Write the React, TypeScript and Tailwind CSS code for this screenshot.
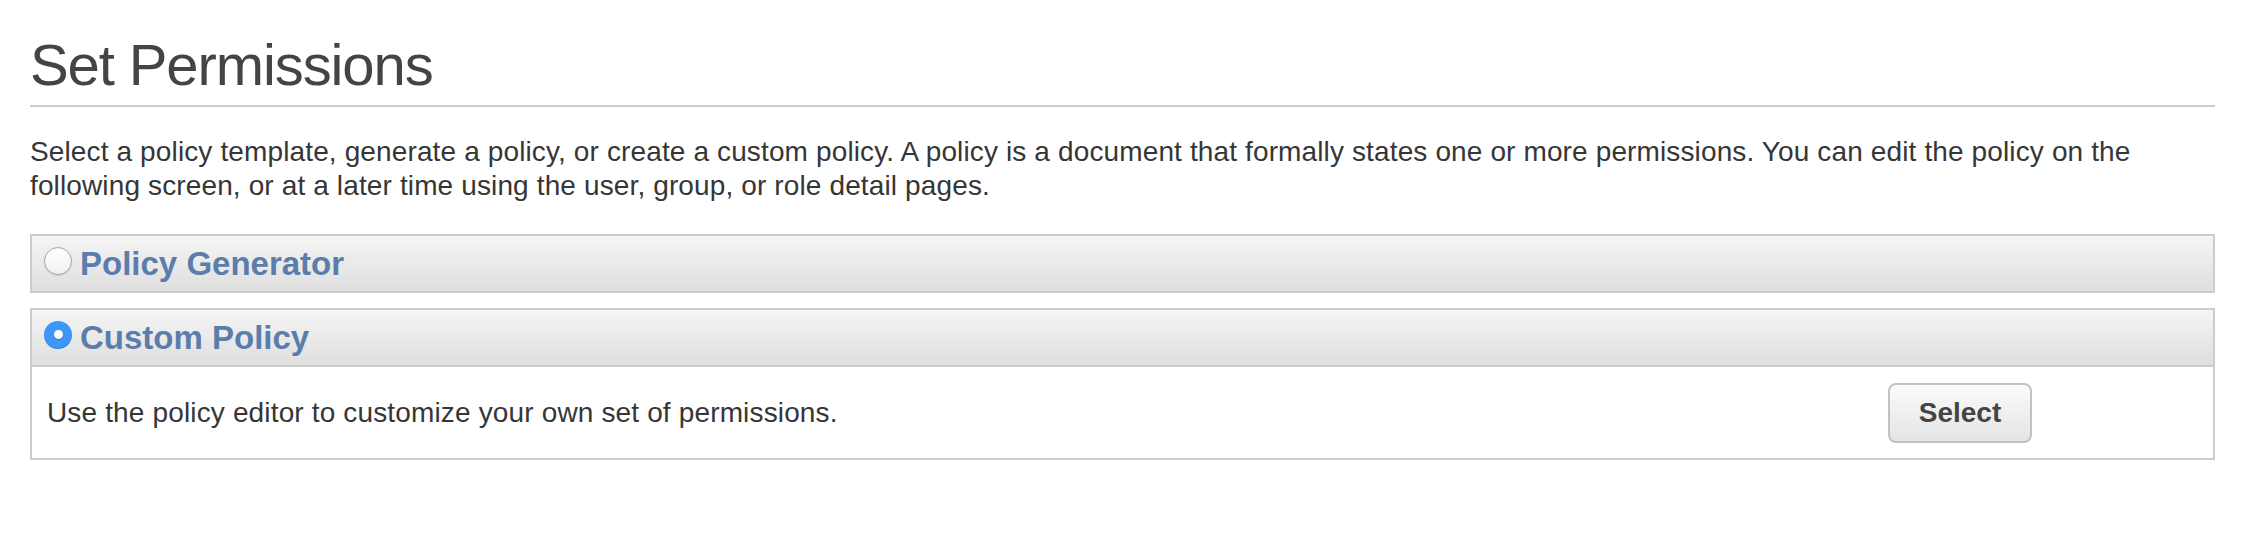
import React from "react";

function Radio({ checked }: { checked: boolean }) {
  if (checked) {
    return (
      <span className="mb-[6px] flex h-[28px] w-[28px] shrink-0 items-center justify-center rounded-full bg-[#3d97f9] shadow-[inset_0_-1px_1px_rgba(0,0,0,0.15)]">
        <span className="h-[9px] w-[9px] rounded-full bg-white shadow-[0_1px_1px_rgba(0,0,0,0.25)]" />
      </span>
    );
  }
  return (
    <span className="mb-[6px] block h-[28px] w-[28px] shrink-0 rounded-full border-[1.5px] border-[#a6a6a6] bg-gradient-to-b from-[#ffffff] to-[#f1f1f1] shadow-[0_1px_1px_rgba(0,0,0,0.12)]" />
  );
}

function PanelHeader({ title, checked }: { title: string; checked: boolean }) {
  return (
    <div className="flex h-[55px] items-center gap-[8px] bg-gradient-to-b from-[#f5f5f5] to-[#dfdfdf] pl-[12px]">
      <Radio checked={checked} />
      <span className="text-[33px] font-bold leading-[55px] text-[#5a7dac]">{title}</span>
    </div>
  );
}

export default function App() {
  return (
    <div
      className="min-h-[550px] bg-white pl-[30px] pr-[29px] pt-[36px]"
      style={{ fontFamily: '"Liberation Sans", Arial, Helvetica, sans-serif' }}
    >
      <h1 className="text-[58px] font-normal leading-[58px] tracking-[-1.1px] text-[#444444]">
        Set Permissions
      </h1>
      <div className="mt-[11px] h-[2px] bg-[#cccccc]" />
      <p className="mt-[28px] text-[28px] leading-[34px] tracking-[0.13px] text-[#363636]">
        Select a policy template, generate a policy, or create a custom policy. A policy is a document that formally
        states one or more permissions. You can edit the policy on the following screen, or at a later time using the
        user, group, or role detail pages.
      </p>

      <div className="mt-[31px] border-2 border-[#cccccc]">
        <PanelHeader title="Policy Generator" checked={false} />
      </div>

      <div className="mt-[15px] border-2 border-[#cccccc]">
        <PanelHeader title="Custom Policy" checked={true} />
        <div className="flex h-[93px] items-center justify-between border-t-2 border-[#cccccc] bg-white pl-[15px] pr-[181px]">
          <span className="text-[28px] tracking-[0.15px] text-[#363636]">
            Use the policy editor to customize your own set of permissions.
          </span>
          <button className="h-[60px] w-[144px] rounded-[8px] border-2 border-[#c2c2c2] bg-gradient-to-b from-[#fbfbfb] to-[#e4e4e4] text-[28px] font-bold text-[#444444]">
            Select
          </button>
        </div>
      </div>
    </div>
  );
}
